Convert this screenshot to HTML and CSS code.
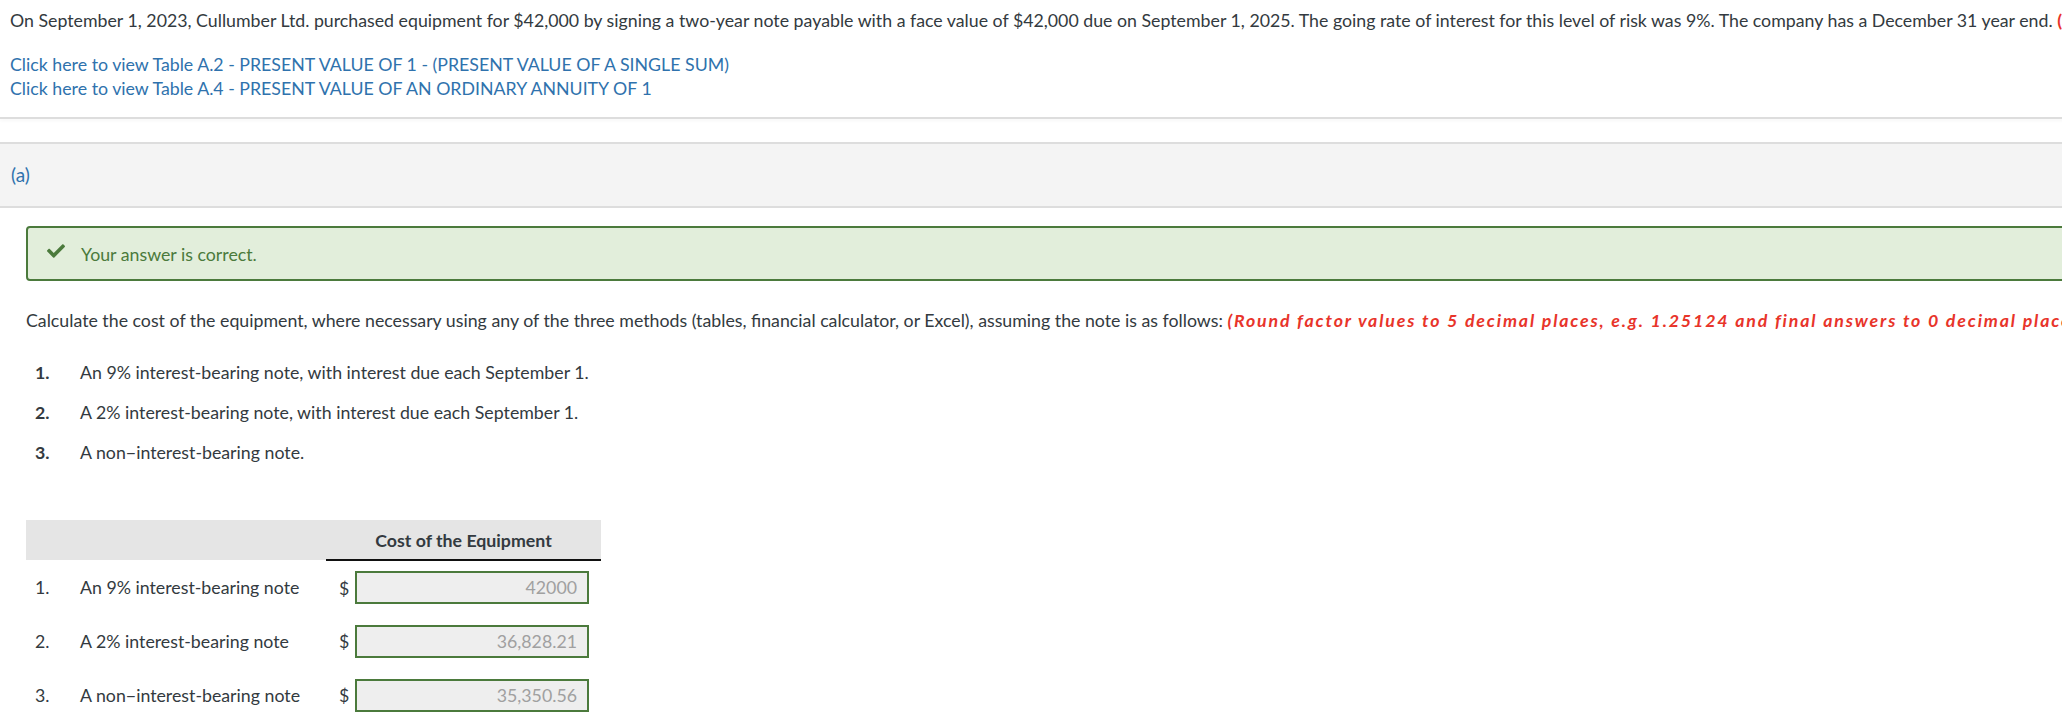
FILE: index.html
```html
<!DOCTYPE html>
<html lang="en">
<head>
<meta charset="utf-8">
<title>Question</title>
<link rel="stylesheet" href="styles.css">
</head>
<body>
<div class="stem">
  <p class="intro">On September 1, 2023, Cullumber Ltd. purchased equipment for $42,000 by signing a two-year note payable with a face value of $42,000 due on September 1, 2025. The going rate of interest for this level of risk was 9%. The company has a December 31 year end. <span class="red">(Round answers to 0 decimal places, e.g. 5,275.)</span></p>
  <div class="links">
    <a href="#">Click here to view Table A.2 - PRESENT VALUE OF 1 - (PRESENT VALUE OF A SINGLE SUM)</a>
    <a href="#">Click here to view Table A.4 - PRESENT VALUE OF AN ORDINARY ANNUITY OF 1</a>
  </div>
</div>
<div class="sep"></div>
<div class="part-head">(a)</div>
<div class="part-body">
  <div class="feedback">
    <svg class="check" viewBox="0 0 512 512" aria-hidden="true"><path d="M173.898 439.404l-166.4-166.4c-9.997-9.997-9.997-26.206 0-36.204l36.203-36.204c9.997-9.998 26.207-9.998 36.204 0L192 312.69 432.095 72.596c9.997-9.997 26.207-9.997 36.204 0l36.203 36.204c9.997 9.997 9.997 26.206 0 36.204l-294.4 294.401c-9.998 9.997-26.207 9.997-36.204-.001z"/></svg>
    <span>Your answer is correct.</span>
  </div>
  <p class="prompt">Calculate the cost of the equipment, where necessary using any of the three methods (tables, financial calculator, or Excel), assuming the note is as follows: <span class="hint">(Round factor values to 5 decimal places, e.g. 1.25124 and final answers to 0 decimal places, e.g. 5,275.)</span></p>
  <ol class="items">
    <li><span class="num">1.</span><span>An 9% interest-bearing note, with interest due each September 1.</span></li>
    <li><span class="num">2.</span><span>A 2% interest-bearing note, with interest due each September 1.</span></li>
    <li><span class="num">3.</span><span>A non&minus;interest-bearing note.</span></li>
  </ol>
  <table class="answers">
    <colgroup>
      <col class="c-num"><col class="c-label"><col class="c-cur"><col class="c-val">
    </colgroup>
    <thead>
      <tr><th></th><th></th><th class="th-val" colspan="2">Cost of the Equipment</th></tr>
    </thead>
    <tbody>
      <tr><td class="rn">1.</td><td>An 9% interest-bearing note</td><td class="cur">$</td><td><div class="field">42000</div></td></tr>
      <tr><td class="rn">2.</td><td>A 2% interest-bearing note</td><td class="cur">$</td><td><div class="field">36,828.21</div></td></tr>
      <tr><td class="rn">3.</td><td>A non&minus;interest-bearing note</td><td class="cur">$</td><td><div class="field">35,350.56</div></td></tr>
    </tbody>
  </table>
</div>
</body>
</html>
```
FILE: styles.css
```css
html, body {
  margin: 0;
  padding: 0;
  overflow: hidden;
  background: #ffffff;
}
body {
  font-family: Lato, "Open Sans", "Liberation Sans", sans-serif;
  font-size: 17.75px;
  line-height: 24px;
  color: #333a40;
  width: 2600px;
}
.stem {
  padding: 8px 0 0 10px;
}
.intro {
  margin: 0;
  white-space: nowrap;
}
.red {
  color: #e8342a;
  font-weight: 700;
}
.links {
  display: flex;
  flex-direction: column;
  margin-top: 20px;
}
.links a {
  color: #2f72ad;
  text-decoration: none;
}
.sep {
  margin-top: 17px;
  height: 2px;
  background: #dddddd;
  box-shadow: 0 2px 3px rgba(0,0,0,0.04);
}
.part-head {
  margin-top: 23px;
  height: 62px;
  border-top: 2px solid #dddddd;
  border-bottom: 2px solid #dddddd;
  background: #f4f4f4;
  color: #2f72ad;
  font-size: 19px;
  padding-left: 11px;
  display: flex;
  align-items: center;
}
.part-body {
  padding-left: 26px;
}
.feedback {
  margin-top: 18px;
  height: 51px;
  border: 2px solid #4b7a3c;
  border-radius: 4px;
  background: #e2eedb;
  color: #4b7a3c;
  display: flex;
  align-items: center;
  gap: 16px;
  padding-left: 19px;
}
.check {
  width: 18px;
  height: 18px;
  fill: #4b7a3c;
  margin-top: -6px;
}
.prompt {
  margin: 27px 0 0;
  white-space: nowrap;
}
.hint {
  color: #e8342a;
  font-weight: 700;
  font-style: italic;
  letter-spacing: 1.85px;
}
.items {
  list-style: none;
  margin: 28px 0 0;
  padding: 0;
  display: flex;
  flex-direction: column;
  gap: 16px;
}
.items li {
  display: flex;
}
.items .num {
  width: 54px;
  padding-left: 9px;
  box-sizing: border-box;
  font-weight: 700;
}
.answers {
  margin-top: 56px;
  border-collapse: collapse;
  table-layout: fixed;
  width: 575px;
}
.c-num { width: 54px; }
.c-label { width: 246px; }
.c-cur { width: 27px; }
.c-val { width: 248px; }
.answers thead tr {
  background: #e5e5e5;
  height: 40px;
}
.answers th {
  padding: 0;
  font-weight: 700;
}
.th-val {
  text-align: center;
  border-bottom: 2px solid #111111;
}
.answers tbody tr {
  height: 54px;
}
.answers td {
  padding: 0;
  vertical-align: middle;
}
.rn {
  padding-left: 9px !important;
}
.cur {
  padding-left: 13px !important;
}
.field {
  width: 234px;
  height: 33px;
  box-sizing: border-box;
  border: 2px solid #4b7a3c;
  background: #eeeeee;
  color: #a0a0a0;
  text-align: right;
  padding-right: 10px;
  line-height: 29px;
  margin-left: 2px;
}
```
